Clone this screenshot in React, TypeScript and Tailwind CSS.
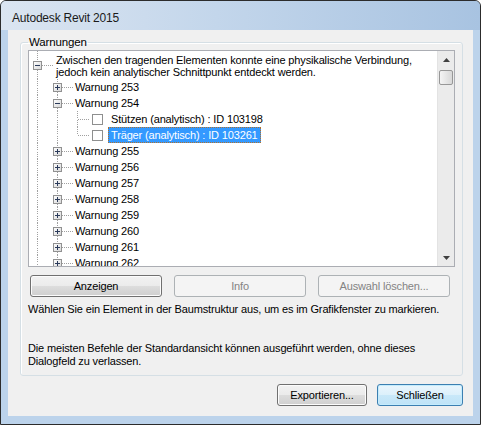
type Box = '+' | '-' | null;

function Guide({ w, h, top, bottom, horiz, box }: { w: number; h: number; top?: boolean; bottom?: boolean; horiz?: boolean; box?: Box }) {
  const mid = Math.floor(h / 2);
  const gap = box ? 4 : 0;
  return (
    <svg width={w} height={h} className="shrink-0 block" shapeRendering="crispEdges">
      {top && <line x1={8.5} y1={0} x2={8.5} y2={mid - gap} stroke="#a0a0a0" strokeDasharray="1 1" />}
      {bottom && <line x1={8.5} y1={mid + gap + 1} x2={8.5} y2={h} stroke="#a0a0a0" strokeDasharray="1 1" />}
      {horiz && <line x1={box ? 13 : 9} y1={mid + 0.5} x2={w} y2={mid + 0.5} stroke="#a0a0a0" strokeDasharray="1 1" />}
      {box && (
        <g>
          <defs>
            <linearGradient id="bx" x1="0" y1="0" x2="1" y2="1">
              <stop offset="0" stopColor="#ffffff" />
              <stop offset="1" stopColor="#d6d6d6" />
            </linearGradient>
          </defs>
          <rect x={4.5} y={mid - 3.5} width={8} height={8} fill="url(#bx)" stroke="#919191" />
          <line x1={6} y1={mid + 0.5} x2={11} y2={mid + 0.5} stroke="#2b3b5b" />
          {box === '+' && <line x1={8.5} y1={mid - 2} x2={8.5} y2={mid + 3} stroke="#2b3b5b" />}
        </g>
      )}
    </svg>
  )
}

function Branch({ label, box }: { label: string; box: Box }) {
  return (
    <div className="flex h-[16px] items-center">
      <Guide w={20} h={16} top bottom />
      <Guide w={24} h={16} top bottom horiz box={box} />
      <span className="px-[2px] leading-[16px] whitespace-nowrap">{label}</span>
    </div>
  )
}

function Leaf({ label, last, selected }: { label: string; last?: boolean; selected?: boolean }) {
  return (
    <div className="flex h-[16px] items-center">
      <Guide w={20} h={16} top bottom />
      <Guide w={20} h={16} top bottom />
      <Guide w={20} h={16} top bottom={!last} horiz />
      <div className="w-[19px] h-[16px] shrink-0 flex items-center">
        <div className="ml-[3px] w-[11px] h-[11px] border border-[#8e8f8f] bg-white" />
      </div>
      <span
        className={
          selected
            ? 'px-[2px] h-[16px] leading-[14px] whitespace-nowrap bg-[#3399ff] text-white border border-dotted border-[#b0712e]'
            : 'px-[3px] leading-[16px] whitespace-nowrap'
        }
      >
        {label}
      </span>
    </div>
  )
}

function Scrollbar() {
  return (
    <div className="w-[17px] shrink-0 flex flex-col bg-[#ebebeb] border-l border-[#e3e3e3]">
      <div className="h-[17px] flex items-center justify-center">
        <svg width="7" height="4"><path d="M3.5 0 L7 4 L0 4 Z" fill="#404040" /></svg>
      </div>
      <div className="mx-[1px] mt-[2px] h-[15px] rounded-[2px] border border-[#979797] bg-[linear-gradient(to_right,#f4f4f4,#e6e6e6_50%,#d8d8d8)]" />
      <div className="flex-1" />
      <div className="h-[17px] flex items-center justify-center">
        <svg width="7" height="4"><path d="M0 0 L7 0 L3.5 4 Z" fill="#404040" /></svg>
      </div>
    </div>
  )
}

function Btn({ children, disabled, isDefault, w }: { children: React.ReactNode; disabled?: boolean; isDefault?: boolean; w: string }) {
  const base = 'h-[22px] rounded-[3px] border flex items-center justify-center shrink-0 ' + w + ' '
  if (disabled)
    return <div className={base + 'border-[#adb2b5] bg-[#f4f4f4] text-[#838383]'}>{children}</div>
  if (isDefault)
    return (
      <div className={base + 'border-[#3c7fb1] bg-[linear-gradient(#eaf6fd_0%,#dcf0fb_50%,#c9e8f9_50%,#bfe3f7_100%)] shadow-[inset_0_0_0_1px_#c4ecfd]'}>
        {children}
      </div>
    )
  return (
    <div className={base + 'border-[#707070] bg-[linear-gradient(#f2f2f2_0%,#ebebeb_50%,#dddddd_50%,#cfcfcf_100%)] shadow-[inset_0_0_0_1px_#fcfcfc]'}>
      {children}
    </div>
  )
}

export default function App() {
  const more = ['255', '256', '257', '258', '259', '260', '261', '262']
  return (
    <div className="w-[481px] h-[425px] bg-white font-['Liberation_Sans',Arial,sans-serif] text-[11px] tracking-[-0.15px] text-black">
      <div className="w-full h-full flex flex-col border border-[#2c2c2c] rounded-t-[6px] overflow-hidden bg-[#bcd3eb]">
        {/* Title bar */}
        <div className="h-[29px] shrink-0 flex items-center pl-[11px] bg-[linear-gradient(to_right,#dbe5f1,#c3d6eb_45%,#a8c3e1)]">
          <span className="text-[12px] tracking-[-0.2px] text-[#1a1a1a] pt-[4px]">Autodesk Revit 2015</span>
        </div>

        {/* Client */}
        <div className="mx-[7px] h-[386px] shrink-0 bg-[#f0f0f0] flex flex-col">
          <fieldset className="ml-[12px] mt-[5px] w-[443px] border border-[#d5dfe5] rounded-[3px] px-[7px] pb-[7px] shadow-[inset_1px_1px_0_#ffffff]">
            <legend className="px-[1px] leading-[15px] text-[11.5px]">Warnungen</legend>

            {/* Tree */}
            <div className="h-[217px] flex border border-[#abadb3] bg-white overflow-hidden">
              <div className="flex-1 overflow-hidden">
                <div className="flex h-[28px]">
                  <Guide w={24} h={28} top bottom horiz box="-" />
                  <div className="px-[3px] pt-[3px] leading-[12px] whitespace-nowrap">
                    Zwischen den tragenden Elementen konnte eine physikalische Verbindung,
                    <br />
                    jedoch kein analytischer Schnittpunkt entdeckt werden.
                  </div>
                </div>
                <Branch label="Warnung 253" box="+" />
                <Branch label="Warnung 254" box="-" />
                <Leaf label="Stützen (analytisch) : ID 103198" />
                <Leaf label="Träger (analytisch) : ID 103261" last selected />
                {more.map((n) => (
                  <Branch key={n} label={'Warnung ' + n} box="+" />
                ))}
              </div>
              <Scrollbar />
            </div>

            {/* Action buttons */}
            <div className="flex gap-[12px] ml-[2px] mt-[8px]">
              <Btn w="w-[132px]">Anzeigen</Btn>
              <Btn w="w-[132px]" disabled>Info</Btn>
              <Btn w="w-[132px]" disabled>Auswahl löschen...</Btn>
            </div>

            <p className="mt-[5px] leading-[15px] whitespace-nowrap">
              Wählen Sie ein Element in der Baumstruktur aus, um es im Grafikfenster zu markieren.
            </p>
            <p className="mt-[25px] leading-[13px] whitespace-nowrap">
              Die meisten Befehle der Standardansicht können ausgeführt werden, ohne dieses
              <br />
              Dialogfeld zu verlassen.
            </p>
          </fieldset>

          <div className="flex justify-end gap-[10px] pr-[10px] mt-[8px]">
            <Btn w="w-[90px]">Exportieren...</Btn>
            <Btn w="w-[86px]" isDefault>Schließen</Btn>
          </div>
        </div>
      </div>
    </div>
  )
}
